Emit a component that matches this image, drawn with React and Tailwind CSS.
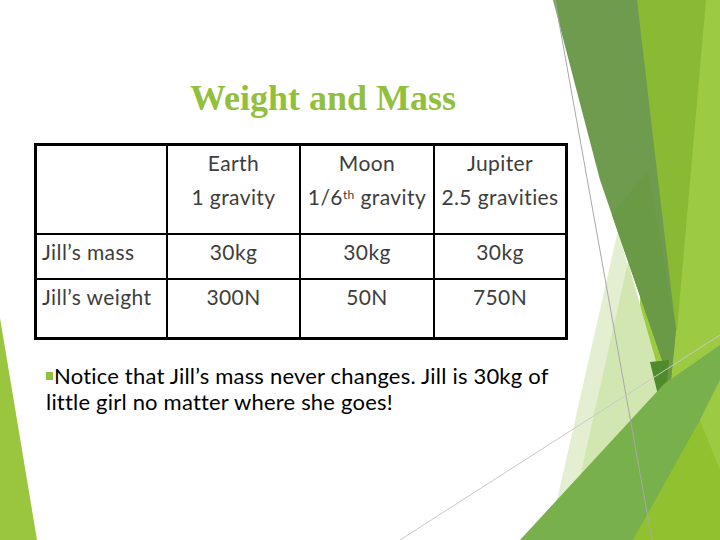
import React from 'react';

// slide decoration on the right/left edges (Facet-style green facets)
function Facets() {
  return (
    <svg
      className="absolute inset-0 w-[720px] h-[540px]"
      viewBox="0 0 720 540"
      aria-hidden="true"
    >
      {/* left lime wedge */}
      <polygon points="0,318 0,540 37,540" fill="#9ac53f" />

      {/* right column base */}
      <polygon points="640,0 720,0 720,540 640,540" fill="#9ccb43" />
      <polygon points="632,0 706,0 677,330 660,330" fill="#8ab934" />

      {/* pale facets */}
      <polygon points="618,230 548,540 610,540 662,392" fill="#e3efd0" />
      <polygon points="628,262 566,540 640,540 664,390" fill="#d2e6b1" />
      <polygon points="662,380 700,420 680,470 664,440" fill="#b3d878" />

      {/* dark green band */}
      <polygon points="553,0 637,0 658,180 676,330 668,410 662,360 600,180" fill="#6f9b4e" />
      <polygon points="612,215 648,170 676,330 668,410 662,360" fill="#6a9a45" />
      <polygon points="650,362 669,360 664,420" fill="#4f8b2b" />

      {/* bottom facets */}
      <polygon points="520,540 664,384 720,345 720,540" fill="#78b04b" />
      <polygon points="633,540 700,420 720,380 720,540" fill="#92c130" />
      <polygon points="700,420 720,380 720,470" fill="#9ccb43" />

      {/* hairlines */}
      <line x1="555" y1="0" x2="652" y2="540" stroke="#a8a8a8" strokeWidth="1" />
      <line x1="400" y1="540" x2="720" y2="335" stroke="#c8c8c8" strokeWidth="1" />
    </svg>
  );
}

const rows = [
  { label: "Jill’s mass", values: ['30kg', '30kg', '30kg'], h: 'h-[45px]' },
  { label: "Jill’s weight", values: ['300N', '50N', '750N'], h: 'h-[59px]' },
];

export default function App() {
  return (
    <div className="relative w-[720px] h-[540px] overflow-hidden bg-white">
      <Facets />

      <div className="relative flex flex-col pl-[34px] pt-[78px]">
        {/* Title */}
        <h1 className="w-[578px] text-center font-['Liberation_Serif',serif] font-bold text-[36px] leading-[40px] text-[#92c03d]">
          Weight and Mass
        </h1>

        {/* Table */}
        <div className="mt-[25px] w-[534px] border-[3px] border-black font-['Lato',sans-serif] text-[21px] leading-[33px] tracking-[0.4px] text-[#3d3d3d]">
          <div className="grid grid-cols-[129px_133px_134px_132px] h-[87px]">
            <div />
            <div className="border-l-2 border-black text-center">
              <div>Earth</div>
              <div className="leading-[35px]">1 gravity</div>
            </div>
            <div className="border-l-2 border-black text-center">
              <div>Moon</div>
              <div className="leading-[35px] whitespace-nowrap">
                1/6<sup className="text-[12px]">th</sup> gravity
              </div>
            </div>
            <div className="border-l-2 border-black text-center">
              <div>Jupiter</div>
              <div className="leading-[35px] whitespace-nowrap">2.5 gravities</div>
            </div>
          </div>

          {rows.map((row) => (
            <div
              key={row.label}
              className={`grid grid-cols-[129px_133px_134px_132px] border-t-2 border-black ${row.h}`}
            >
              <div className="pl-[5px] whitespace-nowrap">{row.label}</div>
              {row.values.map((v, i) => (
                <div key={i} className="border-l-2 border-black text-center">
                  {v}
                </div>
              ))}
            </div>
          ))}
        </div>

        {/* Note */}
        <p className="mt-[23px] ml-[12px] w-[515px] font-['Lato',sans-serif] text-[22px] leading-[26px] tracking-[0.2px] text-black">
          <span className="inline-block w-[7px] h-[8px] bg-[#92c03d] mr-px mb-[4px]" />
          Notice that Jill’s mass never changes. Jill is 30kg of little girl no
          matter where she goes!
        </p>
      </div>
    </div>
  );
}
